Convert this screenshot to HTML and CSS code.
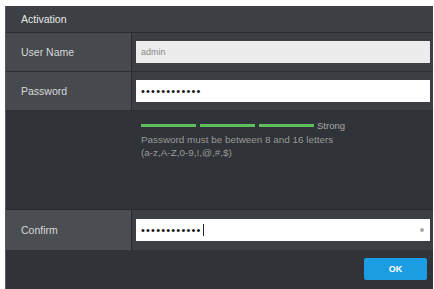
FILE: index.html
```html
<!DOCTYPE html>
<html>
<head>
<meta charset="utf-8">
<link rel="stylesheet" href="styles.css">
</head>
<body>
<div class="dialog">
  <div class="title">Activation</div>
  <div class="row">
    <div class="label">User Name</div>
    <div class="cell"><div class="field disabled">admin</div></div>
  </div>
  <div class="row">
    <div class="label">Password</div>
    <div class="cell"><div class="field dots">••••••••••••</div></div>
  </div>
  <div class="strength">
    <div class="meter">
      <span class="bar"></span><span class="bar"></span><span class="bar"></span>
      <span class="level">Strong</span>
    </div>
    <div class="hint">Password must be between 8 and 16 letters<br>(a-z,A-Z,0-9,!,@,#,$)</div>
  </div>
  <div class="row confirm">
    <div class="label">Confirm</div>
    <div class="cell"><div class="field dots"><span>••••••••••••</span><span class="caret"></span><span class="eye"></span></div></div>
  </div>
  <div class="footer"><button class="ok">OK</button></div>
</div>
</body>
</html>
```
FILE: styles.css
```css
html, body { margin: 0; padding: 0; background: #ffffff; }
body { font-family: "Liberation Sans", Arial, sans-serif; }
.dialog {
  margin: 6px 1px 0 5px;
  height: 283px;
  background: #303337;
  border-left: 1px solid #55585c;
  display: flex;
  flex-direction: column;
}
.title {
  height: 26px;
  background: #3d4045;
  color: #e8e8e8;
  font-size: 10.5px;
  line-height: 26px;
  padding-left: 15px;
  border-bottom: 1px solid #2a2c30;
}
.row {
  display: flex;
  height: 38px;
  border-bottom: 1px solid #2c2e32;
}
.label {
  background: #46494e;
  color: #d8d8d8;
  font-size: 10.5px;
  line-height: 38px;
  padding-left: 15px;
  box-sizing: border-box;
  width: 126px;
  border-right: 1px solid #2a2c30;
}
.cell {
  flex: 1;
  background: #3b3e43;
  display: flex;
  align-items: center;
  padding: 0 3px 0 4px;
}
.field {
  flex: 1;
  height: 22px;
  background: #ffffff;
  box-sizing: border-box;
  padding-left: 5px;
  font-size: 9px;
  line-height: 22px;
  color: #333;
  display: flex;
  align-items: center;
}
.field.disabled { background: #ececec; color: #888; }
.field.dots { font-size: 11px; letter-spacing: 1.2px; color: #111; }
.caret { width: 1px; height: 12px; background: #222; margin-left: 1px; }
.eye { width: 4px; height: 4px; border-radius: 50%; background: #aaa; margin-left: auto; margin-right: 6px; }
.strength {
  height: 99px;
  background: #303337;
  padding: 9px 0 0 135px;
  box-sizing: border-box;
  border-bottom: 1px solid #26282b;
}
.meter { display: flex; align-items: center; height: 10px; }
.bar {
  width: 55px;
  height: 3px;
  background: #5fbf5f;
  margin-right: 4px;
}
.bar:nth-child(3) { margin-right: 3px; }
.level { color: #a8a8a8; font-size: 9.5px; }
.hint {
  color: #9a9a9a;
  font-size: 9.9px;
  line-height: 13px;
  margin-top: 3px;
}
.confirm { height: 40px; border-bottom: none; background: #3b3e43; }
.confirm .label { line-height: 40px; background: #4a4d52; }
.footer {
  flex: 1;
  display: flex;
  justify-content: flex-end;
  align-items: flex-start;
  padding: 8px 6px 0 0;
  background: #303337;
}
.ok {
  width: 63px;
  height: 22px;
  border: none;
  border-radius: 2px;
  background: #1c9de3;
  color: #fff;
  font-family: "Liberation Sans", Arial, sans-serif;
  font-size: 9px;
  font-weight: bold;
}
```
